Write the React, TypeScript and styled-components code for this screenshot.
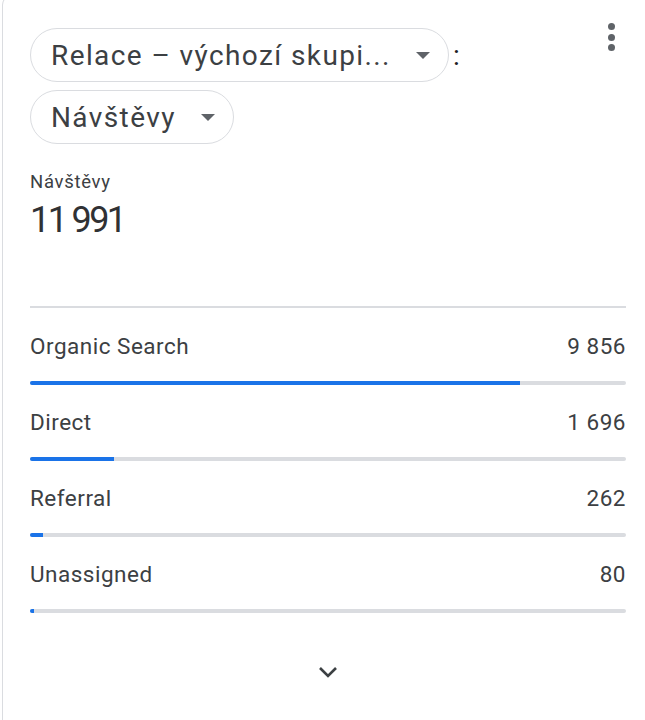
import React from 'react';
import styled, { createGlobalStyle } from 'styled-components';

type Channel = {
  name: string;
  value: number;
};

const TOTAL = 11991;

const channels: Channel[] = [
  { name: 'Organic Search', value: 9856 },
  { name: 'Direct', value: 1696 },
  { name: 'Referral', value: 262 },
  { name: 'Unassigned', value: 80 },
];

const formatNumber = (n: number) =>
  n.toString().replace(/\B(?=(\d{3})+(?!\d))/g, '\u00a0');

const GlobalStyle = createGlobalStyle`
  html, body {
    margin: 0;
    padding: 0;
    background: #ffffff;
    overflow: hidden;
  }
  body {
    font-family: Roboto, 'Noto Sans', Arial, sans-serif;
    color: #3c4043;
  }
`;

const Card = styled.div`
  box-sizing: border-box;
  width: calc(100% - 2px);
  height: 740px;
  margin: -5px 0 0 2px;
  border: 1.5px solid #dadce0;
  border-right: none;
  border-radius: 10px 0 0 10px;
  background: #fff;
  padding: 32px 0 0 27px;
`;

const Inner = styled.div`
  width: 596px;
  position: relative;
`;

const Header = styled.div`
  display: flex;
  flex-direction: column;
  align-items: flex-start;
  gap: 8px;
`;

const PillRow = styled.div`
  display: flex;
  align-items: center;
  gap: 4px;
`;

const Pill = styled.button`
  display: flex;
  align-items: center;
  height: 54px;
  box-sizing: border-box;
  padding: 0 18px 0 20px;
  border: 1.5px solid #dadce0;
  border-radius: 27px;
  background: #fff;
  font-family: Roboto, Arial, sans-serif;
  font-size: 28px;
  letter-spacing: 1.4px;
  color: #3c4043;
  gap: 25px;
  cursor: pointer;
  white-space: nowrap;
`;

const Caret = styled.span`
  width: 0;
  height: 0;
  border-left: 7.5px solid transparent;
  border-right: 7.5px solid transparent;
  border-top: 7px solid #5f6368;
`;

const Colon = styled.span`
  font-size: 28px;
  color: #202124;
  line-height: 1;
  margin-top: 2px;
`;

const MenuButton = styled.div`
  position: absolute;
  top: -5px;
  right: 11px;
  display: flex;
  flex-direction: column;
  gap: 3.5px;
`;

const Dot = styled.span`
  width: 7px;
  height: 7px;
  border-radius: 50%;
  background: #5f6368;
`;

const MetricLabel = styled.div`
  margin-top: 27px;
  font-size: 18.5px;
  letter-spacing: 0.7px;
  color: #3c4043;
`;

const MetricValue = styled.div`
  margin-top: 6px;
  font-size: 36px;
  font-weight: 400;
  letter-spacing: -2.6px;
  color: #303134;
`;

const Divider = styled.div`
  height: 1.5px;
  background: #dadce0;
  margin-top: 65px;
`;

const List = styled.div`
  display: flex;
  flex-direction: column;
  padding-top: 24px;
`;

const Row = styled.div`
  display: flex;
  flex-direction: column;
  height: 76px;
`;

const RowLine = styled.div`
  display: flex;
  justify-content: space-between;
  align-items: center;
  font-size: 22.5px;
  letter-spacing: 0.5px;
  color: #3c4043;
  line-height: 28px;
`;

const Track = styled.div`
  margin-top: 21px;
  height: 4px;
  background: #dadce0;
  border-radius: 2px;
  overflow: hidden;
`;

const Fill = styled.div`
  height: 100%;
  background: #1a73e8;
`;

const Footer = styled.div`
  display: flex;
  justify-content: center;
  padding-top: 30px;
`;

const App = () => {
  return (
    <>
      <GlobalStyle />
      <Card>
        <Inner>
          <MenuButton>
            <Dot />
            <Dot />
            <Dot />
          </MenuButton>
          <Header>
            <PillRow>
              <Pill>
                Relace – výchozí skupi...
                <Caret />
              </Pill>
              <Colon>:</Colon>
            </PillRow>
            <Pill>
              Návštěvy
              <Caret />
            </Pill>
          </Header>

          <MetricLabel>Návštěvy</MetricLabel>
          <MetricValue>{formatNumber(TOTAL)}</MetricValue>

          <Divider />

          <List>
            {channels.map((c) => (
              <Row key={c.name}>
                <RowLine>
                  <span>{c.name}</span>
                  <span>{formatNumber(c.value)}</span>
                </RowLine>
                <Track>
                  <Fill style={{ width: `${(c.value / TOTAL) * 100}%` }} />
                </Track>
              </Row>
            ))}
          </List>

          <Footer>
            <svg width="20" height="12" viewBox="0 0 20 12">
              <path d="M2 2 L10 10 L18 2" fill="none" stroke="#3c4043" strokeWidth="2.6" />
            </svg>
          </Footer>
        </Inner>
      </Card>
    </>
  );
};

export default App;
